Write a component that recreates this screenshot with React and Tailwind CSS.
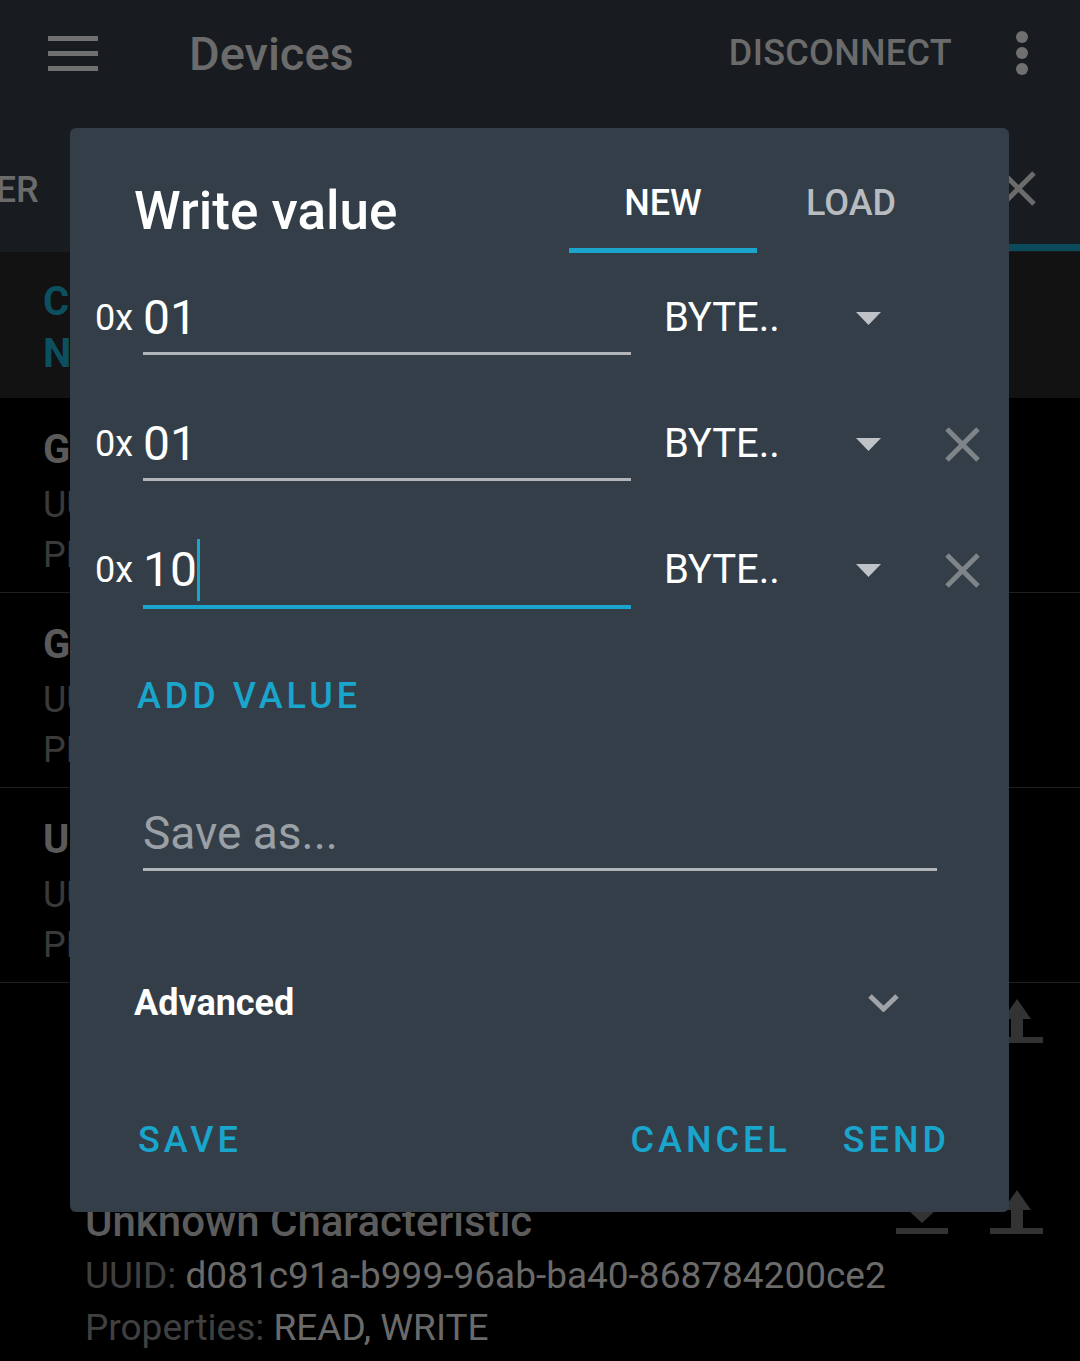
import React from "react";

function Cross({ className }) {
  return (
    <svg viewBox="0 0 37 37" className={className}>
      <path d="M3 3L34 34M34 3L3 34" stroke="currentColor" strokeWidth="5" fill="none" />
    </svg>
  );
}

function UploadIcon() {
  return (
    <svg viewBox="0 0 53 44" className="w-[53px] h-[44px] text-[#333]">
      <polygon points="13,20 27,0 41,20" fill="currentColor" />
      <rect x="21" y="19" width="12" height="19" fill="currentColor" />
      <rect x="0" y="38" width="53" height="6" fill="currentColor" />
    </svg>
  );
}

function DownloadIcon() {
  return (
    <svg viewBox="0 0 52 44" className="w-[52px] h-[44px] text-[#333]">
      <rect x="20" y="0" width="12" height="21" fill="currentColor" />
      <polygon points="12,20 40,20 26,33" fill="currentColor" />
      <rect x="0" y="38" width="52" height="6" fill="currentColor" />
    </svg>
  );
}

function ServiceRow({ name, uuid, type }) {
  return (
    <div className="h-[195px] border-b border-[#1f1f1f] pl-[43px] pt-[27px]">
      <div className="h-[50px] leading-[50px] text-[40px] font-bold text-[#5a5a5a]">{name}</div>
      <div className="h-[60px] leading-[60px] text-[36px] text-[#3a3a3a]">UUID: {uuid}</div>
      <div className="h-[40px] leading-[40px] text-[36px] text-[#3a3a3a]">{type}</div>
    </div>
  );
}

function CharRow() {
  return (
    <div className="h-[191px] flex justify-between pl-[85px]">
      <div className="pt-[23px]">
        <div className="h-[50px] leading-[50px] text-[42px] font-medium text-[#5c5c5c]">Unknown Characteristic</div>
        <div className="h-[58px] leading-[58px] text-[37px] text-[#404040]">
          UUID: <span className="text-[#6a6a6a]">d081c91a-b999-96ab-ba40-868784200ce2</span>
        </div>
        <div className="h-[46px] leading-[46px] text-[37px] text-[#404040]">
          Properties: <span className="text-[#6a6a6a]">READ, WRITE</span>
        </div>
      </div>
      <div className="flex items-start gap-[42px] pt-[16px] pr-[37px]">
        <DownloadIcon />
        <UploadIcon />
      </div>
    </div>
  );
}

function ValueRow({ value, active, removable }) {
  return (
    <div className="flex items-start h-[126px] pt-[38px] pl-[25px]">
      <div className="shrink-0 w-[48px] h-[54px] flex items-center text-[36px] leading-none text-white">0x</div>
      <div
        className={
          active
            ? "shrink-0 w-[488px] h-[66px] border-b-[4px] border-[#19a5cc]"
            : "shrink-0 w-[488px] h-[64px] border-b-[3px] border-[#b1b4b8]"
        }
      >
        <div className="h-[54px] flex items-center text-[48px] leading-none text-white">
          {value}
          {active && <span className="inline-block w-[3px] h-[62px] bg-[#19a5cc]" />}
        </div>
      </div>
      <div className="shrink-0 w-[192px] ml-[33px] h-[54px] flex items-center text-[40px] leading-none text-white">BYTE..</div>
      <div className="shrink-0 h-[54px] flex items-center">
        <svg viewBox="0 0 25 13" className="w-[25px] h-[13px] text-[#bfc3c7]">
          <polygon points="0,0 25,0 12.5,13" fill="currentColor" />
        </svg>
      </div>
      {removable && (
        <div className="shrink-0 h-[54px] flex items-center ml-[63px]">
          <Cross className="w-[37px] h-[37px] text-[#7f8488]" />
        </div>
      )}
    </div>
  );
}

export default function App() {
  return (
    <div className="relative w-[1080px] h-[1361px] bg-black overflow-hidden font-['Roboto','Liberation_Sans',sans-serif]">
      {/* app bar */}
      <div className="h-[252px] bg-[#181c20] flex flex-col">
        <div className="h-[106px] flex items-center pl-[48px] pr-[52px]">
          <div className="flex flex-col gap-[10px]">
            <div className="w-[50px] h-[5px] bg-[#707070]" />
            <div className="w-[50px] h-[5px] bg-[#707070]" />
            <div className="w-[50px] h-[5px] bg-[#707070]" />
          </div>
          <div className="ml-[91px] text-[47px] font-medium text-[#6b6b6b] leading-none">Devices</div>
          <div className="ml-auto text-[36px] font-medium text-[#6b6b6b] leading-none tracking-[0.3px]">DISCONNECT</div>
          <div className="ml-[64px] flex flex-col gap-[4px]">
            <div className="w-[12px] h-[12px] rounded-full bg-[#707070]" />
            <div className="w-[12px] h-[12px] rounded-full bg-[#707070]" />
            <div className="w-[12px] h-[12px] rounded-full bg-[#707070]" />
          </div>
        </div>
        <div className="h-[146px] flex justify-between">
          <div className="-ml-[92px] pt-[66px] text-[36px] font-medium text-[#6b6b6b] leading-none">SERVER</div>
          <div className="w-[120px] mb-[1px] border-b-[7px] border-[#0b4a5a] flex items-start pt-[64px] pl-[40px]">
            <Cross className="w-[37px] h-[37px] text-[#6b6b6b]" />
          </div>
        </div>
      </div>

      {/* connection header */}
      <div className="h-[146px] bg-[#121212] pl-[43px] pt-[24px]">
        <div className="h-[52px] leading-[52px] text-[40px] font-bold text-[#0c4f5e]">CONNECTED</div>
        <div className="h-[52px] leading-[52px] text-[40px] font-bold text-[#0c4f5e]">NOT BONDED</div>
      </div>

      <ServiceRow name="Generic Access" uuid="0x1800" type="PRIMARY SERVICE" />
      <ServiceRow name="Generic Attribute" uuid="0x1801" type="PRIMARY SERVICE" />
      <ServiceRow name="Unknown Service" uuid="d081c91a-b999-96ab-ba40-868784200ce2" type="PRIMARY SERVICE" />
      <CharRow />
      <CharRow />

      {/* dialog */}
      <div className="absolute left-[70px] top-[128px] w-[939px] h-[1084px] rounded-[6px] bg-[#343e48] flex flex-col">
        <div className="flex justify-between pl-[64px] pr-[64px] h-[125px]">
          <div className="pt-[57px] text-[53px] font-medium leading-none text-white">Write value</div>
          <div className="flex">
            <div className="w-[188px] flex flex-col items-center justify-between">
              <div className="pt-[57px] text-[36px] font-medium leading-none text-white">NEW</div>
              <div className="h-[5px] w-full bg-[#19a5cc]" />
            </div>
            <div className="w-[188px] flex flex-col items-center">
              <div className="pt-[57px] text-[36px] font-medium leading-none text-[#b8bcc0]">LOAD</div>
            </div>
          </div>
        </div>

        <ValueRow value="01" />
        <ValueRow value="01" removable />
        <ValueRow value="10" removable active />

        <div className="mt-[47px] pl-[67px] text-[36px] leading-none font-medium tracking-[4px] text-[#19a5cc]">ADD VALUE</div>

        <div className="mt-[96px] ml-[73px] w-[794px] h-[61px] border-b-[3px] border-[#b1b4b8] text-[46px] leading-none text-[#9aa0a6]">
          Save as...
        </div>

        <div className="mt-[114px] flex items-center pl-[64px] pr-[110px] h-[36px]">
          <div className="text-[36px] font-bold leading-none text-white">Advanced</div>
          <svg viewBox="0 0 31 18" className="ml-auto w-[31px] h-[18px] text-[#a0a4a8]">
            <path d="M2 2L15.5 15L29 2" stroke="currentColor" strokeWidth="5" fill="none" />
          </svg>
        </div>

        <div className="mt-[101px] flex items-center pl-[68px] pr-[59px] text-[36px] leading-none font-medium tracking-[4px] text-[#19a5cc]">
          <div>SAVE</div>
          <div className="ml-auto">CANCEL</div>
          <div className="ml-[52px]">SEND</div>
        </div>
      </div>
    </div>
  );
}
